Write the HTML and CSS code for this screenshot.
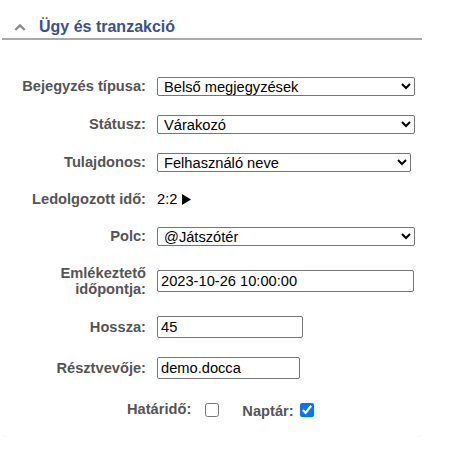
FILE: index.html
```html
<!DOCTYPE html>
<html lang="hu">
<head>
<meta charset="utf-8">
<title>Ügy és tranzakció</title>
<link rel="stylesheet" href="styles.css">
</head>
<body>
<section class="card">
  <header class="card-head">
    <svg class="chev" width="12" height="8" viewBox="0 0 12 8"><path d="M1.3 7 L6 2.4 L10.7 7" fill="none" stroke="#8c8c8c" stroke-width="2.4"/></svg>
    <h2 class="title">Ügy és tranzakció</h2>
  </header>
  <form class="form">
    <label class="lbl">Bejegyzés típusa:</label>
    <div class="fld"><select class="sel sel-wide"><option>Belső megjegyzések</option></select></div>

    <label class="lbl">Státusz:</label>
    <div class="fld"><select class="sel sel-wide"><option>Várakozó</option></select></div>

    <label class="lbl">Tulajdonos:</label>
    <div class="fld"><select class="sel sel-owner"><option>Felhasználó neve</option></select></div>

    <label class="lbl">Ledolgozott idő:</label>
    <div class="fld txt">2:2 <svg class="play" width="9" height="11" viewBox="0 0 9 11"><path d="M0 0 L9 5.5 L0 11 Z" fill="#000"/></svg></div>

    <label class="lbl">Polc:</label>
    <div class="fld"><select class="sel sel-wide"><option>@Játszótér</option></select></div>

    <label class="lbl two">Emlékeztető időpontja:</label>
    <div class="fld"><input class="inp inp-wide" type="text" value="2023-10-26 10:00:00"></div>

    <label class="lbl">Hossza:</label>
    <div class="fld"><input class="inp inp-short" type="text" value="45"></div>

    <label class="lbl">Résztvevője:</label>
    <div class="fld"><input class="inp inp-part" type="text" value="demo.docca"></div>

    <div class="checks">
      <label class="chk-lbl">Határidő:</label><input class="chk" type="checkbox">
      <label class="chk-lbl naptar">Naptár:</label><input class="chk" type="checkbox" checked>
    </div>
  </form>
</section>
</body>
</html>
```

FILE: styles.css
```css
html, body {
  margin: 0;
  padding: 0;
  background: #fff;
}
body {
  font-family: "Liberation Sans", Arial, sans-serif;
}
.card {
  width: 420px;
  margin-left: 2px;
  background: #fff;
  border-radius: 0 0 6px 6px;
  box-shadow: 0 2px 2px -1px rgba(0, 0, 0, 0.10);
  padding-bottom: 17px;
}
.card-head {
  display: flex;
  align-items: center;
  gap: 13px;
  padding: 17px 0 2px 12px;
  border-bottom: 2px solid #a9a9a9;
}
.chev {
  display: block;
}
.title {
  margin: 0;
  font-size: 16px;
  line-height: 19px;
  font-weight: bold;
  color: #3a5190;
}
.form {
  display: grid;
  grid-template-columns: 144px 1fr;
  column-gap: 11px;
  row-gap: 19px;
  align-items: center;
  padding-top: 37px;
}
.lbl {
  text-align: right;
  font-weight: bold;
  font-size: 14.67px;
  line-height: 17px;
  color: #555;
}
.lbl.two {
  line-height: 16px;
}
.fld {
  display: flex;
  align-items: center;
}
.txt {
  font-size: 14.67px;
  line-height: 17px;
  color: #000;
  gap: 5px;
}
.play {
  display: block;
}
.sel {
  box-sizing: border-box;
  height: 19px;
  font-family: "Liberation Sans", Arial, sans-serif;
  font-size: 14.67px;
  color: #000;
  background: #fff;
  border: 1px solid #767676;
  border-radius: 2px;
  padding: 0 0 0 2px;
  margin: 0;
}
.sel-wide { width: 258px; }
.sel-owner { width: 254px; }
.inp {
  box-sizing: border-box;
  height: 22px;
  font-family: "Liberation Sans", Arial, sans-serif;
  font-size: 14.67px;
  color: #000;
  border: 1px solid #767676;
  border-radius: 2px;
  padding: 1px 3px;
  margin: 0;
}
.inp-wide { width: 257px; }
.inp-short { width: 146px; }
.inp-part { width: 143px; }
.checks {
  grid-column: 1 / -1;
  display: flex;
  align-items: center;
  padding-left: 125px;
  margin-top: 1px;
}
.chk-lbl {
  font-weight: bold;
  font-size: 14.67px;
  line-height: 17px;
  color: #555;
}
.naptar {
  margin-left: 23px;
  padding-top: 4px;
}
.chk {
  width: 14px;
  height: 14px;
  margin: 0 0 0 14px;
}
.naptar + .chk {
  margin-left: 6px;
}
```
